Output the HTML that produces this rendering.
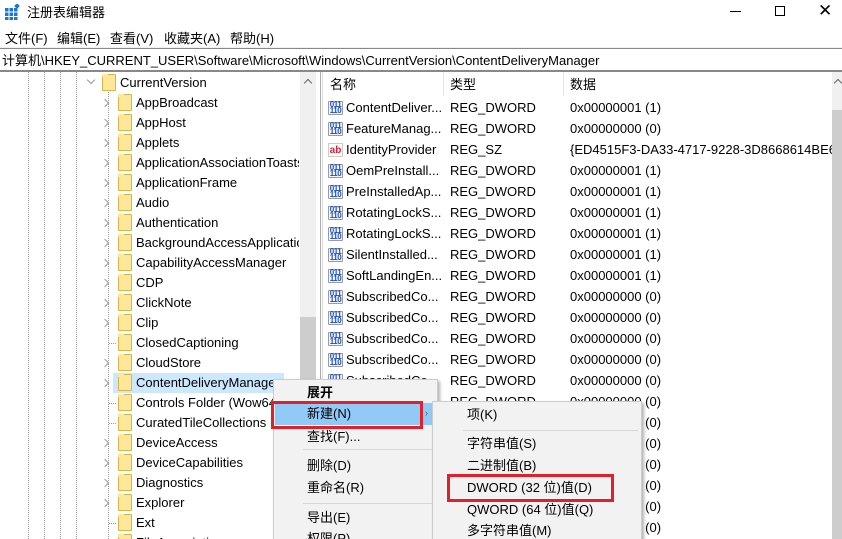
<!DOCTYPE html><html style="width:842px;height:539px;overflow:hidden"><head><meta charset="utf-8"><style>
*{margin:0;padding:0;box-sizing:border-box}
body{width:842px;height:539px;overflow:hidden;background:#fff;font-family:"Liberation Sans","Noto Sans CJK SC",sans-serif;font-size:13px;line-height:15px;color:#000;position:relative}
.a{position:absolute;white-space:nowrap}
.fold{position:absolute;width:14px;height:17px;background:#ffe79a;border:1px solid #d9b34e;border-radius:1px}
.fold:before{content:"";position:absolute;left:-1px;top:-1px;width:6px;height:3px;background:#ffe79a}
.chev{position:absolute;width:6px;height:6px;border-right:1.3px solid #999;border-bottom:1.3px solid #999;transform:rotate(-45deg)}
.dot{position:absolute;width:0;border-left:1px dotted #999;height:467px}
.ic{position:absolute;width:15px;height:14px;font-size:8px;line-height:6px;color:#2050c0;font-weight:bold;letter-spacing:-0.5px;border:1px solid #99a;border-radius:1px;text-align:center;background:#f4f6ff}
.ab{position:absolute;width:15px;height:14px;font-size:10px;color:#d23;font-weight:bold;line-height:13px;border:1px solid #ccc;text-align:center;background:#fff}
.sep{position:absolute;height:1px;background:#d7d7d7}
</style></head><body>
<svg class="a" style="left:5px;top:4px" width="16" height="16"><g fill="#1e78d0"><rect x="0" y="4" width="3.5" height="3.5"/><rect x="4.5" y="4" width="3.5" height="3.5"/><rect x="9" y="4" width="3.5" height="3.5"/><rect x="0" y="8.5" width="3.5" height="3.5"/><rect x="4.5" y="8.5" width="3.5" height="3.5"/><rect x="9" y="8.5" width="3.5" height="3.5"/><rect x="0" y="13" width="3.5" height="3"/><rect x="4.5" y="13" width="3.5" height="3"/><rect x="9" y="13" width="3.5" height="3"/><rect x="10" y="0" width="4" height="4" transform="rotate(45 12 2)"/></g></svg>
<div class="a" style="left:27px;top:5px;font-size:13px">注册表编辑器</div>
<div class="a" style="left:730px;top:11px;width:11px;height:1px;background:#000"></div>
<div class="a" style="left:775px;top:6px;width:10px;height:10px;border:1px solid #000"></div>
<div class="a" style="left:818px;top:2px;font-size:17px;line-height:18px">✕</div>
<div class="a" style="left:5px;top:31px">文件(F)</div>
<div class="a" style="left:57px;top:31px">编辑(E)</div>
<div class="a" style="left:110px;top:31px">查看(V)</div>
<div class="a" style="left:164px;top:31px">收藏夹(A)</div>
<div class="a" style="left:230px;top:31px">帮助(H)</div>
<div class="a" style="left:0;top:47px;width:842px;height:1px;background:#f0f0f0"></div>
<div class="a" style="left:0;top:48px;width:842px;height:1px;background:#888"></div>
<div class="a" style="left:2px;top:53px">计算机\HKEY_CURRENT_USER\Software\Microsoft\Windows\CurrentVersion\ContentDeliveryManager</div>
<div class="a" style="left:0;top:70px;width:842px;height:2px;background:#888"></div>
<div class="dot" style="left:28px;top:72px"></div><div class="dot" style="left:44px;top:72px"></div><div class="dot" style="left:60px;top:72px"></div><div class="dot" style="left:76px;top:72px"></div><div class="dot" style="left:108px;top:92px"></div>
<div class="chev" style="left:88px;top:77px;transform:rotate(45deg)"></div>
<div class="fold" style="left:102px;top:74px"></div>
<div class="a" style="left:120px;top:75px">CurrentVersion</div>
<div class="a" style="left:113px;top:373px;width:171px;height:20px;background:#cce8ff"></div>
<div id="tree"></div>
<div class="a" style="left:300px;top:72px;width:16px;height:467px;background:#f0f0f0"></div>
<div class="a" style="left:300px;top:317px;width:16px;height:222px;background:#cdcdcd"></div>
<div class="chev" style="left:305px;top:80px;transform:rotate(-135deg);border-color:#666"></div>
<div class="a" style="left:320px;top:72px;width:1px;height:467px;background:#aaa"></div>
<div class="a" style="left:322px;top:72px;width:1px;height:467px;background:#ddd"></div>
<div class="a" style="left:330px;top:77px">名称</div>
<div class="a" style="left:443px;top:72px;width:1px;height:24px;background:#e5e5e5"></div>
<div class="a" style="left:450px;top:77px">类型</div>
<div class="a" style="left:563px;top:72px;width:1px;height:24px;background:#e5e5e5"></div>
<div class="a" style="left:570px;top:77px">数据</div>
<div id="list"></div>
<div class="a" style="left:832px;top:72px;width:10px;height:467px;background:#f0f0f0"></div>
<div class="a" style="left:832px;top:110px;width:10px;height:429px;background:#cdcdcd"></div>
<div class="chev" style="left:835px;top:80px;transform:rotate(-135deg);border-color:#666"></div>
<div class="a" style="left:273px;top:379px;width:165px;height:162px;background:#f2f2f2;border:1px solid #ccc;box-shadow:2px 2px 3px rgba(0,0,0,.3)"></div>
<div class="a" style="left:275px;top:403px;width:158px;height:22px;background:#91c9f7"></div>
<div class="a" style="left:271px;top:401px;width:152px;height:28px;border:3px solid #e0202a"></div>
<div class="a" style="left:307px;top:385px;font-weight:bold">展开</div>
<div class="a" style="left:307px;top:406px">新建(N)</div>
<div class="a" style="left:425px;top:406px;font-size:9px;color:#555">›</div>
<div class="a" style="left:307px;top:429px">查找(F)...</div>
<div class="sep" style="left:303px;top:449px;width:131px"></div>
<div class="a" style="left:307px;top:458px">删除(D)</div>
<div class="a" style="left:307px;top:480px">重命名(R)</div>
<div class="sep" style="left:303px;top:503px;width:131px"></div>
<div class="a" style="left:307px;top:510px">导出(E)</div>
<div class="a" style="left:307px;top:531px">权限(P)...</div>
<div class="a" style="left:432px;top:401px;width:210px;height:140px;background:#f2f2f2;border:1px solid #ccc;box-shadow:2px 2px 3px rgba(0,0,0,.3)"></div>
<div class="a" style="left:467px;top:407px">项(K)</div>
<div class="sep" style="left:463px;top:430px;width:175px"></div>
<div class="a" style="left:467px;top:436px">字符串值(S)</div>
<div class="a" style="left:467px;top:458px">二进制值(B)</div>
<div class="a" style="left:467px;top:480px">DWORD (32 位)值(D)</div>
<div class="a" style="left:447px;top:474px;width:167px;height:28px;border:3px solid #e0202a"></div>
<div class="a" style="left:467px;top:502px">QWORD (64 位)值(Q)</div>
<div class="a" style="left:467px;top:523px">多字符串值(M)</div>
<script>
var t=["AppBroadcast",1,"AppHost",1,"Applets",1,"ApplicationAssociationToasts",1,"ApplicationFrame",1,"Audio",1,"Authentication",1,"BackgroundAccessApplications",1,"CapabilityAccessManager",1,"CDP",1,"ClickNote",1,"Clip",1,"ClosedCaptioning",0,"CloudStore",1,"ContentDeliveryManager",1,"Controls Folder (Wow64)",0,"CuratedTileCollections",0,"DeviceAccess",1,"DeviceCapabilities",1,"Diagnostics",1,"Explorer",1,"Ext",0,"FileAssociations",1];
var h="";for(var i=0;i<t.length;i+=2){var y=95+i/2*20;
if(t[i+1])h+='<div class="chev" style="left:102px;top:'+(y+5)+'px"></div>';else h+='<div class="a" style="left:109px;top:'+(y+8)+'px;width:7px;border-top:1px dotted #999"></div>';
h+='<div class="fold" style="left:118px;top:'+(y-1)+'px"></div><div class="a" style="left:136px;top:'+y+'px;width:163px;overflow:hidden">'+t[i]+'</div>';}
document.getElementById("tree").outerHTML=h;
var L=[["ContentDeliver...","REG_DWORD","0x00000001 (1)"],["FeatureManag...","REG_DWORD","0x00000000 (0)"],["IdentityProvider","REG_SZ","{ED4515F3-DA33-4717-9228-3D8668614BE6}"],["OemPreInstall...","REG_DWORD","0x00000001 (1)"],["PreInstalledAp...","REG_DWORD","0x00000001 (1)"],["RotatingLockS...","REG_DWORD","0x00000001 (1)"],["RotatingLockS...","REG_DWORD","0x00000001 (1)"],["SilentInstalled...","REG_DWORD","0x00000001 (1)"],["SoftLandingEn...","REG_DWORD","0x00000001 (1)"],["SubscribedCo...","REG_DWORD","0x00000000 (0)"],["SubscribedCo...","REG_DWORD","0x00000000 (0)"],["SubscribedCo...","REG_DWORD","0x00000000 (0)"],["SubscribedCo...","REG_DWORD","0x00000000 (0)"],["SubscribedCo...","REG_DWORD","0x00000000 (0)"],["SubscribedCo...","REG_DWORD","0x00000000 (0)"],["SubscribedCo...","REG_DWORD","0x00000000 (0)"],["SubscribedCo...","REG_DWORD","0x00000000 (0)"],["SubscribedCo...","REG_DWORD","0x00000000 (0)"],["SubscribedCo...","REG_DWORD","0x00000000 (0)"],["SubscribedCo...","REG_DWORD","0x00000000 (0)"],["SubscribedCo...","REG_DWORD","0x00000000 (0)"],["SubscribedCo...","REG_DWORD","0x00000000 (0)"]];
h="";for(var j=0;j<L.length;j++){var y=100+j*21;
h+=(L[j][1]=="REG_SZ"?'<div class="ab" style="left:328px;top:'+(y+1)+'px">ab</div>':'<div class="ic" style="left:328px;top:'+(y+1)+'px">011<br>110</div>');
h+='<div class="a" style="left:346px;top:'+y+'px">'+L[j][0]+'</div><div class="a" style="left:450px;top:'+y+'px">'+L[j][1]+'</div><div class="a" style="left:570px;top:'+y+'px">'+L[j][2]+'</div>';}
document.getElementById("list").outerHTML=h;
</script>
</body></html>
